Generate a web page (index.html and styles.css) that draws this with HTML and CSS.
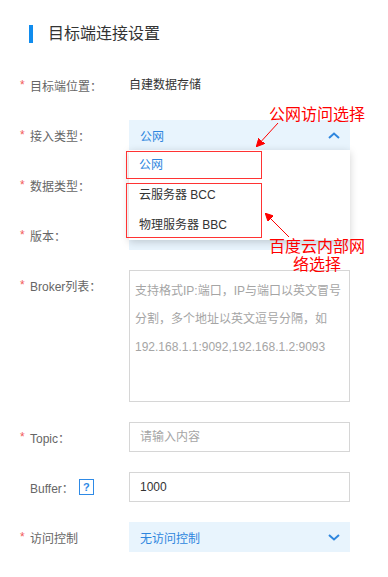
FILE: index.html
```html
<!DOCTYPE html>
<html lang="zh-CN">
<head>
  <meta charset="UTF-8">
  <meta name="viewport" content="width=device-width, initial-scale=1.0">
  <title>目标端连接设置</title>
  <link rel="stylesheet" href="styles.css">
</head>
<body>

  <div class="page">
    <h2 class="section-title">目标端连接设置</h2>

    <div class="form">
      <div class="row">
        <label class="label"><span class="star">*</span>目标端位置：</label>
        <div class="field text-value">自建数据存储</div>
      </div>

      <div class="row">
        <label class="label"><span class="star">*</span>接入类型：</label>
        <div class="field select open">
          <span class="select-text">公网</span>
          <svg class="chevron" width="12" height="7" viewBox="0 0 12 7"><polyline points="1,6 6,1.5 11,6" /></svg>
          <div class="dropdown">
            <div class="option active">公网</div>
            <div class="option">云服务器 BCC</div>
            <div class="option">物理服务器 BBC</div>
            <div class="mark mark-public"></div>
            <div class="mark mark-inner"></div>
          </div>
        </div>
      </div>

      <div class="row">
        <label class="label"><span class="star">*</span>数据类型：</label>
        <div class="field select"><span class="select-text"></span></div>
      </div>

      <div class="row">
        <label class="label"><span class="star">*</span>版本：</label>
        <div class="field select"><span class="select-text"></span></div>
      </div>

      <div class="row">
        <label class="label"><span class="star">*</span>Broker列表：</label>
        <textarea class="field textarea" placeholder="支持格式IP:端口，IP与端口以英文冒号分割，多个地址以英文逗号分隔，如192.168.1.1:9092,192.168.1.2:9093"></textarea>
      </div>

      <div class="row">
        <label class="label"><span class="star">*</span>Topic：</label>
        <input class="field input" type="text" placeholder="请输入内容">
      </div>

      <div class="row">
        <label class="label"><span class="star"></span>Buffer：<span class="help">?</span></label>
        <input class="field input" type="text" value="1000">
      </div>

      <div class="row">
        <label class="label"><span class="star">*</span>访问控制</label>
        <div class="field select">
          <span class="select-text">无访问控制</span>
          <svg class="chevron" width="12" height="7" viewBox="0 0 12 7"><polyline points="1,1 6,5.5 11,1" /></svg>
        </div>
      </div>
    </div>

    <!-- annotations drawn on top of the screenshot -->
    <div class="note note-public">公网访问选择</div>
    <div class="note note-inner">百度云内部网<br>络选择</div>
    <svg class="arrows" width="388" height="577" viewBox="0 0 388 577">
      <defs>
        <marker id="head" markerWidth="8" markerHeight="8" refX="7" refY="4" orient="auto" markerUnits="userSpaceOnUse">
          <path d="M0,0 L8,4 L0,8 Z" fill="#f00" />
        </marker>
      </defs>
      <line x1="278" y1="123" x2="257" y2="146" marker-end="url(#head)" />
      <line x1="289" y1="237" x2="266" y2="214" marker-end="url(#head)" />
    </svg>
  </div>

</body>
</html>
```

FILE: styles.css
```css
  body {
    margin: 0;
    font-family: 'Liberation Sans', 'Noto Sans CJK SC', sans-serif;
    background-color: #ffffff;
    color: #333;
  }
  .page {
    position: relative;
    width: 388px;
    height: 577px;
    overflow: hidden;
  }
  .section-title {
    margin: 0;
    padding: 24px 0 0 29px;
    display: flex;
    align-items: center;
    gap: 15px;
    height: 20px;
    font-size: 16px;
    font-weight: normal;
    line-height: 20px;
    color: #333;
  }
  .section-title::before {
    content: "";
    width: 4px;
    height: 18px;
    background-color: #108cee;
  }
  .form {
    margin-top: 26px;
    padding-left: 20px;
    display: flex;
    flex-direction: column;
    gap: 20px;
  }
  .row {
    display: flex;
    align-items: flex-start;
  }
  .label {
    width: 109px;
    flex-shrink: 0;
    display: flex;
    align-items: center;
    height: 30px;
    font-size: 12px;
    color: #666;
  }
  .star {
    width: 10px;
    color: #f25a5a;
  }
  .help {
    display: inline-flex;
    align-items: center;
    justify-content: center;
    width: 13px;
    height: 14px;
    margin-left: 5px;
    border: 1px solid #2e8ae6;
    color: #2e8ae6;
    font-size: 11px;
    font-weight: bold;
  }
  .field {
    box-sizing: border-box;
    width: 221px;
    height: 30px;
    font-family: inherit;
    font-size: 12px;
  }
  .text-value {
    line-height: 30px;
    color: #333;
  }
  .select {
    position: relative;
    display: flex;
    align-items: center;
    justify-content: space-between;
    padding: 0 10px 0 11px;
    background-color: #e8f4fd;
    color: #2e86de;
  }
  .chevron {
    fill: none;
    stroke: #2e86de;
    stroke-width: 2;
  }
  .dropdown {
    position: absolute;
    top: 30px;
    left: 0;
    right: 0;
    z-index: 10;
    background: #ffffff;
    box-shadow: 0 2px 8px rgba(0, 0, 0, 0.18);
  }
  .option {
    height: 30px;
    line-height: 30px;
    padding-left: 10px;
    color: #333;
  }
  .option.active {
    color: #2e86de;
  }
  .mark {
    position: absolute;
    left: -3px;
    width: 136px;
    border: 1.5px solid #f33;
    box-sizing: border-box;
  }
  .mark-public {
    top: 1px;
    height: 28px;
  }
  .mark-inner {
    top: 33px;
    height: 55px;
  }
  .textarea {
    height: 132px;
    padding: 6px 5px;
    border: 1px solid #d6d6d6;
    line-height: 28px;
    resize: none;
    color: #333;
  }
  .input {
    padding: 0 10px;
    border: 1px solid #d6d6d6;
    color: #333;
    outline: none;
  }
  .textarea::placeholder,
  .input::placeholder {
    color: #a5a5a5;
  }

  .note {
    position: absolute;
    z-index: 20;
    font-family: 'Noto Sans CJK SC', sans-serif;
    font-size: 16px;
    line-height: 18px;
    color: #f00;
    text-align: center;
    width: 100px;
  }
  .note-public {
    left: 267px;
    top: 104px;
  }
  .note-inner {
    left: 267px;
    top: 236px;
  }
  .arrows {
    position: absolute;
    top: 0;
    left: 0;
    z-index: 20;
    stroke: #f00;
    stroke-width: 1;
    pointer-events: none;
  }
```
